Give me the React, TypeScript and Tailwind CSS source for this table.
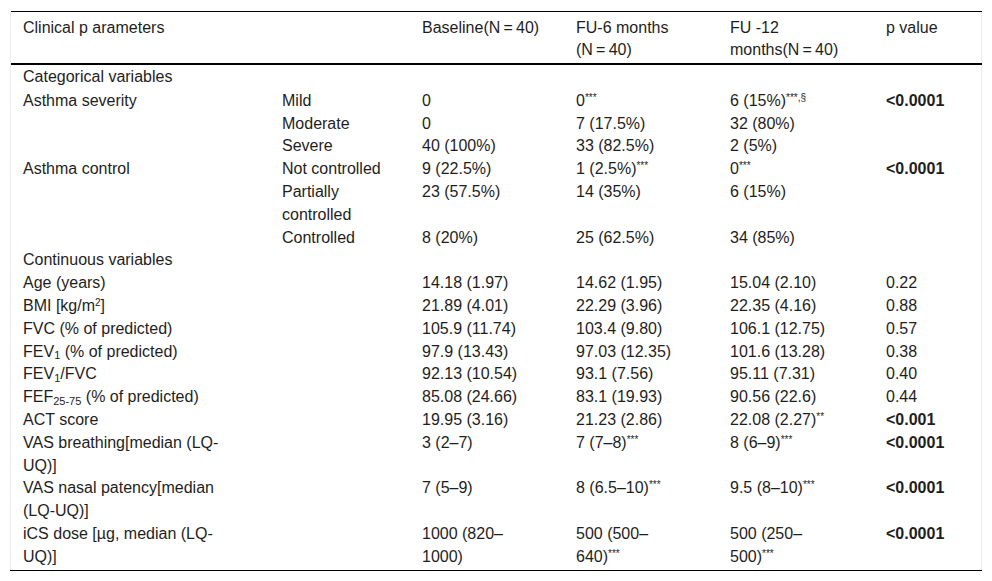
import React from "react";

type Cell = React.ReactNode;
type Row = { c: Cell[] };

const S = ({ children }: { children: React.ReactNode }) => (
  <sup className="text-[10px]">{children}</sup>
);
const B = ({ children }: { children: React.ReactNode }) => (
  <sub className="text-[11px]">{children}</sub>
);
const P = ({ children }: { children: React.ReactNode }) => (
  <span className="font-bold">{children}</span>
);

const rows: Row[] = [
  { c: ["Categorical variables", "", "", "", "", ""] },
  { c: ["Asthma severity", "Mild", "0", <>0<S>***</S></>, <>6 (15%)<S>***,§</S></>, <P>&lt;0.0001</P>] },
  { c: ["", "Moderate", "0", "7 (17.5%)", "32 (80%)", ""] },
  { c: ["", "Severe", "40 (100%)", "33 (82.5%)", "2 (5%)", ""] },
  { c: ["Asthma control", "Not controlled", "9 (22.5%)", <>1 (2.5%)<S>***</S></>, <>0<S>***</S></>, <P>&lt;0.0001</P>] },
  { c: ["", "Partially controlled", "23 (57.5%)", "14 (35%)", "6 (15%)", ""] },
  { c: ["", "Controlled", "8 (20%)", "25 (62.5%)", "34 (85%)", ""] },
  { c: ["Continuous variables", "", "", "", "", ""] },
  { c: ["Age (years)", "", "14.18 (1.97)", "14.62 (1.95)", "15.04 (2.10)", "0.22"] },
  { c: [<>BMI [kg/m<S>2</S>]</>, "", "21.89 (4.01)", "22.29 (3.96)", "22.35 (4.16)", "0.88"] },
  { c: ["FVC (% of predicted)", "", "105.9 (11.74)", "103.4 (9.80)", "106.1 (12.75)", "0.57"] },
  { c: [<>FEV<B>1</B> (% of predicted)</>, "", "97.9 (13.43)", "97.03 (12.35)", "101.6 (13.28)", "0.38"] },
  { c: [<>FEV<B>1</B>/FVC</>, "", "92.13 (10.54)", "93.1 (7.56)", "95.11 (7.31)", "0.40"] },
  { c: [<>FEF<B>25-75</B> (% of predicted)</>, "", "85.08 (24.66)", "83.1 (19.93)", "90.56 (22.6)", "0.44"] },
  { c: ["ACT score", "", "19.95 (3.16)", "21.23 (2.86)", <>22.08 (2.27)<S>**</S></>, <P>&lt;0.001</P>] },
  { c: ["VAS breathing[median (LQ-UQ)]", "", "3 (2–7)", <>7 (7–8)<S>***</S></>, <>8 (6–9)<S>***</S></>, <P>&lt;0.0001</P>] },
  { c: ["VAS nasal patency[median (LQ-UQ)]", "", "7 (5–9)", <>8 (6.5–10)<S>***</S></>, <>9.5 (8–10)<S>***</S></>, <P>&lt;0.0001</P>] },
  { c: ["iCS dose [µg, median (LQ-UQ)]", "", "1000 (820–1000)", <>500 (500–640)<S>***</S></>, <>500 (250–500)<S>***</S></>, <P>&lt;0.0001</P>] },
];

const pad = [
  "pl-[12px] pr-[50px]",
  "pl-[12px] pr-[22px]",
  "pl-[12px] pr-[24px]",
  "pl-[12px] pr-[42px]",
  "pl-[12px] pr-[31px]",
  "pl-[12px] pr-[8px]",
];

const th = "text-left font-normal align-top leading-[22px] pt-[5px] pb-[2px]";

export default function App() {
  return (
    <div className="bg-white w-[992px] h-[581px] pt-[11px] px-[10px] font-['Liberation_Sans',Arial,sans-serif] text-[16px] text-[#1e1e1e]">
      <div className="border-x border-[#ececec] w-[972px]">
        <table className="table-fixed border-collapse w-[971px]">
          <colgroup>
            <col className="w-[259px]" />
            <col className="w-[140px]" />
            <col className="w-[154px]" />
            <col className="w-[154px]" />
            <col className="w-[156px]" />
            <col className="w-[108px]" />
          </colgroup>
          <thead>
            <tr className="border-t border-b-2 border-t-black border-b-black">
              <th className={`${pad[0]} ${th}`}>Clinical p arameters</th>
              <th className={`${pad[1]} ${th}`}></th>
              <th className={`${pad[2]} ${th} whitespace-nowrap`}>Baseline(N{"\u2009"}={"\u2009"}40)</th>
              <th className={`${pad[3]} ${th}`}>FU-6 months (N{"\u2009"}={"\u2009"}40)</th>
              <th className={`${pad[4]} ${th}`}>FU -12 months(N{"\u2009"}={"\u2009"}40)</th>
              <th className={`${pad[5]} ${th}`}>p value</th>
            </tr>
          </thead>
          <tbody>
            {rows.map((r, i) => (
              <tr key={i}>
                {r.c.map((c, j) => (
                  <td
                    key={j}
                    className={`${pad[j]} align-top leading-[22.8px] ${i === 0 ? "pt-[1px] pb-[1px]" : ""} ${i === rows.length - 1 ? "pb-[1px]" : ""}`}
                  >
                    {c}
                  </td>
                ))}
              </tr>
            ))}
          </tbody>
        </table>
      </div>
      <div className="w-[972px] border-t border-black"></div>
    </div>
  );
}
